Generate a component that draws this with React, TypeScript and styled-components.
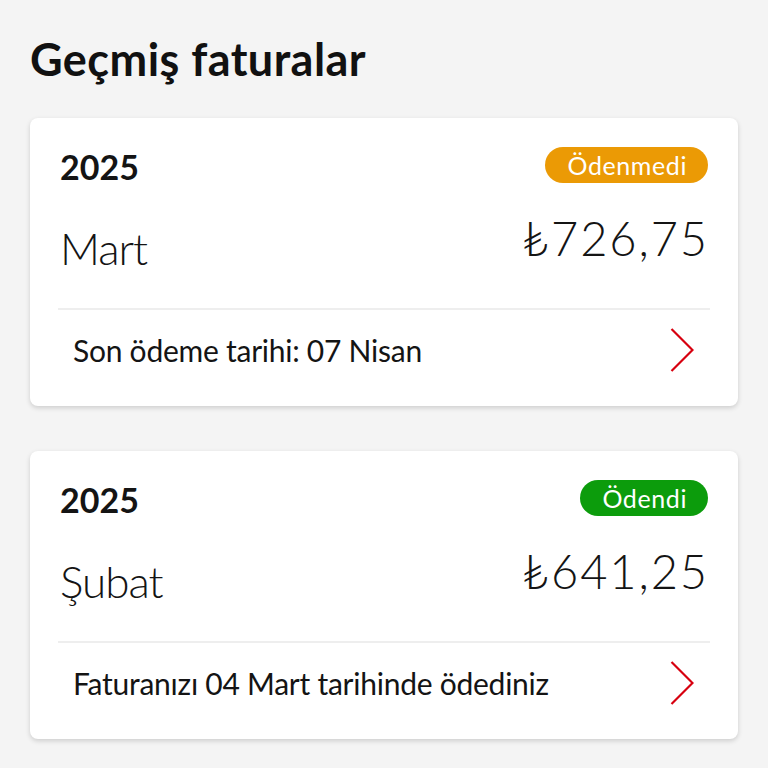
import React from "react";
import styled, { createGlobalStyle } from "styled-components";

const Global = createGlobalStyle`
  html, body { margin: 0; padding: 0; background: #f4f4f4; }
  body { font-family: "Lato", "Noto Sans", sans-serif; color: #141414; }
`;

const Page = styled.div`
  padding: 37px 30px 30px;
  display: flex;
  flex-direction: column;
`;

const Title = styled.h1`
  margin: 0 0 36px;
  font-size: 45px;
  font-weight: 700;
  line-height: 1;
  letter-spacing: 0.45px;
  color: #111;
`;

const List = styled.div`
  display: flex;
  flex-direction: column;
  gap: 45px;
`;

const Card = styled.div`
  background: #fff;
  border-radius: 8px;
  box-shadow: 0 2px 5px rgba(0, 0, 0, 0.16);
  display: flex;
  flex-direction: column;
`;

const Top = styled.div`
  padding: 29px 30px 0;
  display: flex;
  flex-direction: column;
`;

const Row = styled.div<{ $mt?: number }>`
  display: flex;
  align-items: flex-start;
  justify-content: space-between;
  margin-top: ${(p) => p.$mt ?? 0}px;
`;

const Year = styled.span`
  font-size: 34px;
  font-weight: 700;
  line-height: 1;
  margin-top: 3px;
`;

const Badge = styled.span<{ $bg: string }>`
  background: ${(p) => p.$bg};
  color: #fff;
  height: 36px;
  line-height: 36px;
  border-radius: 18px;
  padding: 0 21px 0 22px;
  font-size: 25px;
  letter-spacing: 0.6px;
  white-space: nowrap;
`;

const Month = styled.span`
  font-size: 44px;
  font-weight: 300;
  line-height: 1;
  letter-spacing: -1px;
  margin-top: 11px;
`;

const Amount = styled.span`
  font-size: 47px;
  font-weight: 300;
  line-height: 1;
  letter-spacing: 1.9px;
  margin-right: -1px;
`;

const Divider = styled.div`
  height: 2px;
  background: #eeeeee;
  margin: 38px 28px 0;
`;

const Footer = styled.div`
  display: flex;
  align-items: center;
  justify-content: space-between;
  padding: 18px 44px 34px 43px;
`;

const Note = styled.span`
  font-size: 30px;
  line-height: 1;
  letter-spacing: -0.25px;
`;

const Chevron = () => (
  <svg width="24" height="44" viewBox="0 0 24 44" fill="none">
    <path d="M1.5 1 L22.5 22 L1.5 43" stroke="#d7000f" strokeWidth="2.2" />
  </svg>
);

type Bill = {
  year: string;
  status: string;
  color: string;
  month: string;
  amount: string;
  note: string;
};

const bills: Bill[] = [
  { year: "2025", status: "Ödenmedi", color: "#eb9a05", month: "Mart", amount: "₺726,75", note: "Son ödeme tarihi: 07 Nisan" },
  { year: "2025", status: "Ödendi", color: "#0c9c0c", month: "Şubat", amount: "₺641,25", note: "Faturanızı 04 Mart tarihinde ödediniz" },
];

export default function App() {
  return (
    <>
      <Global />
      <Page>
        <Title>Geçmiş faturalar</Title>
        <List>
          {bills.map((b) => (
            <Card key={b.month}>
              <Top>
                <Row>
                  <Year>{b.year}</Year>
                  <Badge $bg={b.color}>{b.status}</Badge>
                </Row>
                <Row $mt={31}>
                  <Month>{b.month}</Month>
                  <Amount>{b.amount}</Amount>
                </Row>
              </Top>
              <Divider />
              <Footer>
                <Note>{b.note}</Note>
                <Chevron />
              </Footer>
            </Card>
          ))}
        </List>
      </Page>
    </>
  );
}
